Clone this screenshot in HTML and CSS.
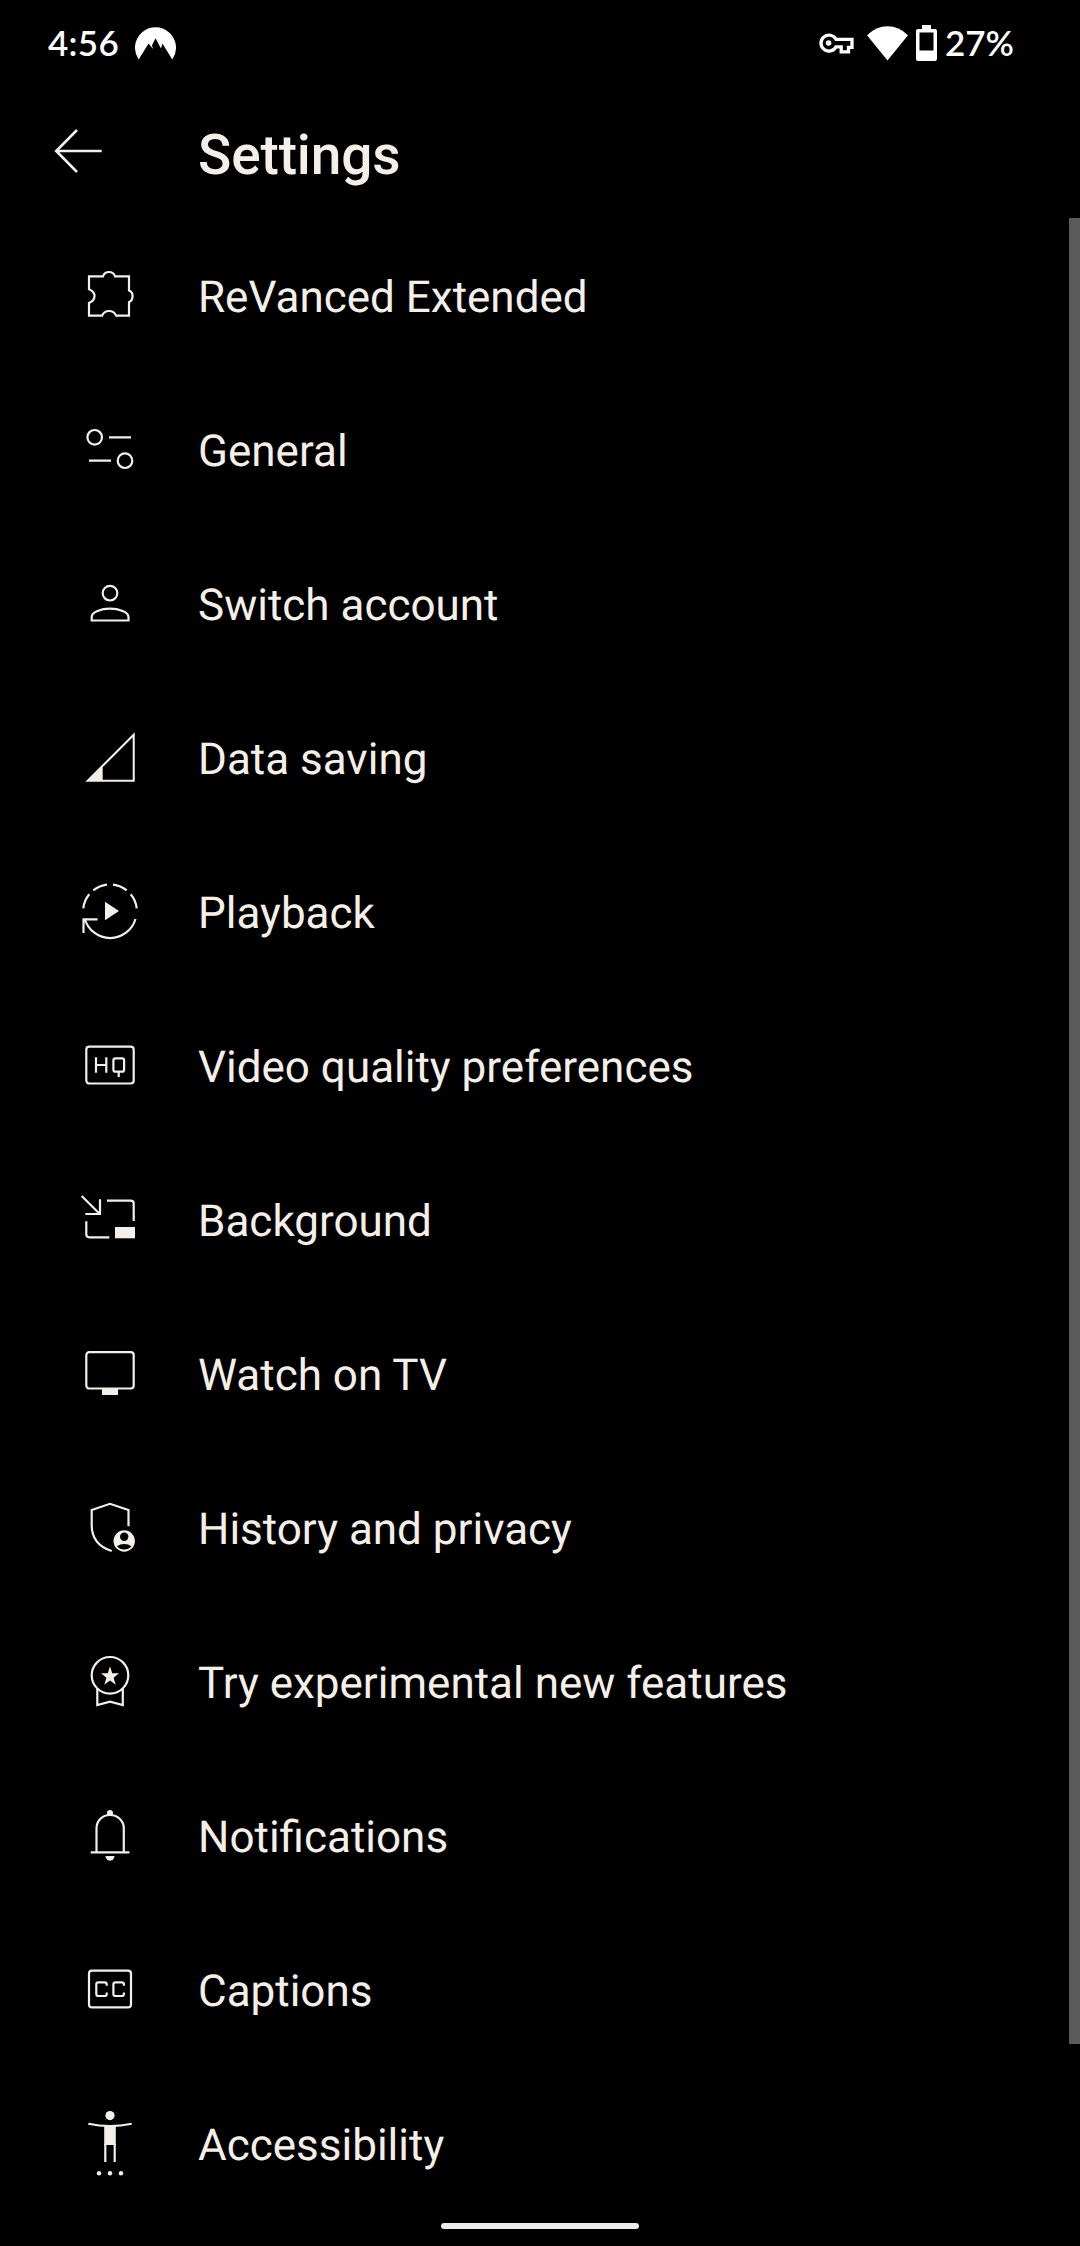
FILE: index.html
```html
<!DOCTYPE html>
<html lang="en">
<head>
<meta charset="utf-8">
<title>Settings</title>
<link rel="stylesheet" href="styles.css">
</head>
<body>
<div class="screen">
  <div class="status">
    <span class="time">4:56</span>
    <svg class="solid vpn-logo" width="41" height="33" viewBox="0 0 41 33"><path d="M3.700 32.500A20.500 20.500 0 1 1 37.300 32.500L27.400 16.500L26 21.500L20.500 11.300L17 18.300L18 22L13.600 16.500Z"/></svg>
    <div class="status-right">
      <svg class="key" width="35" height="21" viewBox="0 0 35 21"><path d="M17 6.300A8 8 0 1 0 17 13.900H22.200V18.800H29.500V14.400H33V6.300Z"/><circle class="dot" cx="9.600" cy="10" r="2.800"/></svg>
      <svg class="solid wifi" width="41" height="35" viewBox="0 0 41 35"><path d="M0 9.300Q9 .3 20.500 .3T41 9.300L20.500 34.500Z"/></svg>
      <svg class="solid battery" width="21" height="36" viewBox="0 0 21 36"><path fill-rule="evenodd" d="M6 0H15V4H19Q21 4 21 6V34Q21 36 19 36H2Q0 36 0 34V6Q0 4 2 4H6ZM3.500 7.500V25.500H17.500V7.500Z"/></svg>
      <span class="percent">27%</span>
    </div>
  </div>
  <header class="header">
    <svg class="back" width="48" height="46" viewBox="0 0 48 46"><path d="M47.700 23H2.500M23 2L2.200 23L23 44"/></svg>
    <h1 class="title">Settings</h1>
  </header>
  <ul class="list">
    <li class="row">
      <svg class="icon" viewBox="0 0 66 66"><path d="M12 14.300H26C27 11.200 29.400 10 32 10S37 11.200 38 14.300H52V28.500C54.500 29.400 55.600 31.500 55.600 34S54.500 39 52 40.200V53.700H39.200C37.700 50.500 35 49 32 49S26.500 50.500 25 53.700H12V41C15.300 39.600 17.500 37.500 17.500 34S15.300 28.500 12 27.200Z"/></svg>
      <span class="label">ReVanced Extended</span>
    </li>
    <li class="row">
      <svg class="icon" viewBox="0 0 66 66"><circle cx="17.700" cy="21.300" r="7.300"/><circle cx="48" cy="44.700" r="7.300"/><path d="M32 21.300H54M12 44.700H34"/></svg>
      <span class="label">General</span>
    </li>
    <li class="row">
      <svg class="icon" viewBox="0 0 66 66"><circle cx="33" cy="23.200" r="7.300"/><path d="M14.700 50.500V47C14.700 42 24 38.700 33 38.700S51.500 42 51.500 47V50.500Z"/></svg>
      <span class="label">Switch account</span>
    </li>
    <li class="row">
      <svg class="icon" viewBox="0 0 66 66"><path class="fill" fill-rule="evenodd" d="M8.250 57.750L57.750 8.250V57.750ZM25.700 55.700H55.700V13.300L25.700 43.300Z"/></svg>
      <span class="label">Data saving</span>
    </li>
    <li class="row">
      <svg class="icon" viewBox="0 0 66 66"><path d="M58.500 41A26.400 26.400 0 0 1 7.800 41M6.300 30.300A26.400 26.400 0 0 1 12.300 16.300M16.300 12.300A26.400 26.400 0 0 1 30 6.600M36 6.600A26.400 26.400 0 0 1 49.700 12.300M53.700 16.300A26.400 26.400 0 0 1 59.700 30.300M6.500 55V41.300H20.500"/><path class="fill" d="M28 23.700L42 33L28 42.300Z"/></svg>
      <span class="label">Playback</span>
    </li>
    <li class="row">
      <svg class="icon" viewBox="0 0 66 66"><rect x="9.300" y="14.700" width="47.400" height="36.800" rx="3"/><path d="M19 25.300V40.700M29.300 25.300V40.700M19 33H29.300M41.700 39.700V45"/><rect x="36.400" y="26.300" width="10.700" height="13.400" rx="2"/></svg>
      <span class="label">Video quality preferences</span>
    </li>
    <li class="row">
      <svg class="icon" viewBox="0 0 66 66"><path d="M4.700 10L23 28.300M8.300 28H23V13.300M30 14.700H53.700Q56.700 14.700 56.700 17.700V35M9.300 35.300V48.300Q9.300 51.300 12.300 51.300H32.300"/><path class="fill" d="M38 41H58V52.300H38Z"/></svg>
      <span class="label">Background</span>
    </li>
    <li class="row">
      <svg class="icon" viewBox="0 0 66 66"><rect x="9.300" y="12.200" width="47.400" height="36.300" rx="3"/><path class="fill" d="M25 48.500H41V55H25Z"/></svg>
      <span class="label">Watch on TV</span>
    </li>
    <li class="row">
      <svg class="icon" viewBox="0 0 66 66"><path d="M34.700 57C22 53 14.700 44 14.700 31V16L33 9.800L51.500 16V32.300"/><path class="fill" fill-rule="evenodd" d="M47.200 36.300A10.700 10.700 0 1 1 47.200 57.700A10.700 10.700 0 1 1 47.200 36.300ZM47.200 38.500A4.200 4.200 0 1 0 47.200 46.900A4.200 4.200 0 1 0 47.200 38.500ZM40 52.300Q43 50 47.200 50T54.400 52.300Q51.500 55.600 47.200 55.600T40 52.300Z"/></svg>
      <span class="label">History and privacy</span>
    </li>
    <li class="row">
      <svg class="icon" viewBox="0 0 66 66"><circle cx="33" cy="27.300" r="18.300"/><path d="M20.300 41V57L33 53.700L45.800 57V41"/><path class="fill" d="M33 18.300L35.200 25.300H42L36.600 29.700L38.700 36.700L33 32.500L27.300 36.700L29.400 29.700L24 25.300H30.800Z"/></svg>
      <span class="label">Try experimental new features</span>
    </li>
    <li class="row">
      <svg class="icon" viewBox="0 0 66 66"><path d="M19.500 50V26.500C19.500 18.500 25.500 13 33 13S46.800 18.500 46.800 26.500V50M13.700 50.400H52.500"/><circle class="fill" cx="33" cy="11" r="3"/><path class="fill" d="M28.500 54H37.500A4.500 4.700 0 0 1 28.500 54Z"/></svg>
      <span class="label">Notifications</span>
    </li>
    <li class="row">
      <svg class="icon" viewBox="0 0 66 66"><rect x="12" y="14.600" width="42" height="36.800" rx="3"/><path d="M29.700 29.800V28.300Q29.700 26.300 27.700 26.300H21.300Q19.300 26.300 19.300 28.300V38Q19.300 40 21.300 40H27.700Q29.700 40 29.700 38V36.500M46.900 29.800V28.300Q46.900 26.300 44.900 26.300H38.400Q36.400 26.300 36.400 28.300V38Q36.400 40 38.400 40H44.900Q46.900 40 46.900 38V36.500"/></svg>
      <span class="label">Captions</span>
    </li>
    <li class="row">
      <svg class="icon" viewBox="0 0 66 66"><path d="M11.300 13.700Q33 18.500 54.700 13.700M28.300 34V52M37.700 34V52"/><g class="fill"><circle cx="33" cy="5.600" r="4.600"/><path d="M27.200 15H38.800V35H27.200Z"/><circle cx="22" cy="63.300" r="2.200"/><circle cx="33" cy="63.300" r="2.200"/><circle cx="44" cy="63.300" r="2.200"/></g></svg>
      <span class="label">Accessibility</span>
    </li>
  </ul>
  <div class="scrollbar"></div>
  <div class="home-bar"></div>
</div>
</body>
</html>
```
FILE: styles.css
```css
* {
  box-sizing: border-box;
}

body {
  margin: 0;
  background: #000;
  color: #f4f0e8;
  font-family: Roboto, sans-serif;
}

.screen {
  position: relative;
  width: 1080px;
  height: 2246px;
  overflow: hidden;
  background: #000;
}

.status {
  display: flex;
  align-items: center;
  height: 86px;
  padding: 0 66px 0 48px;
  color: #fff;
  font-family: Lato, sans-serif;
  font-size: 35px;
  font-weight: 600;
  line-height: 42px;
}

.time {
  width: 87px;
  padding-bottom: 2px;
  letter-spacing: 0.3px;
}

.status-right {
  display: flex;
  align-items: center;
  margin-left: auto;
}

.solid {
  fill: #fff;
}

.key {
  margin-right: 13px;
  fill: none;
  stroke: #fff;
  stroke-width: 3.3;
}

.key .dot {
  fill: #fff;
  stroke: none;
}

.wifi {
  margin-right: 8px;
}

.percent {
  width: 69px;
  margin-left: 8px;
  padding-bottom: 2px;
}

.header {
  display: flex;
  align-items: center;
  height: 132px;
  padding-left: 54px;
}

.back {
  width: 48px;
  margin: 0 96px 3px 0;
  fill: none;
  stroke: #f4f0e8;
  stroke-width: 2.6;
}

.title {
  margin: 0;
  padding-top: 6px;
  font-size: 55px;
  font-weight: 500;
  line-height: 64px;
  letter-spacing: -0.15px;
}

.list {
  margin: 0;
  padding: 0;
  list-style: none;
}

.row {
  display: flex;
  align-items: center;
  height: 154px;
  padding-left: 77px;
}

.icon {
  width: 66px;
  height: 66px;
  margin-right: 55px;
  overflow: visible;
  fill: none;
  stroke: #f4f0e8;
  stroke-width: 2.2;
}

.icon .fill {
  fill: #f4f0e8;
  stroke: none;
}

.label {
  padding-top: 4px;
  font-size: 44px;
  line-height: 52px;
  text-rendering: geometricPrecision;
  white-space: nowrap;
}

.scrollbar {
  position: absolute;
  top: 218px;
  right: 0;
  width: 11px;
  height: 1826px;
  background: #5b5b5b;
}

.home-bar {
  position: absolute;
  bottom: 17px;
  left: 441px;
  width: 198px;
  height: 6px;
  border-radius: 3px;
  background: #ececea;
}
```
